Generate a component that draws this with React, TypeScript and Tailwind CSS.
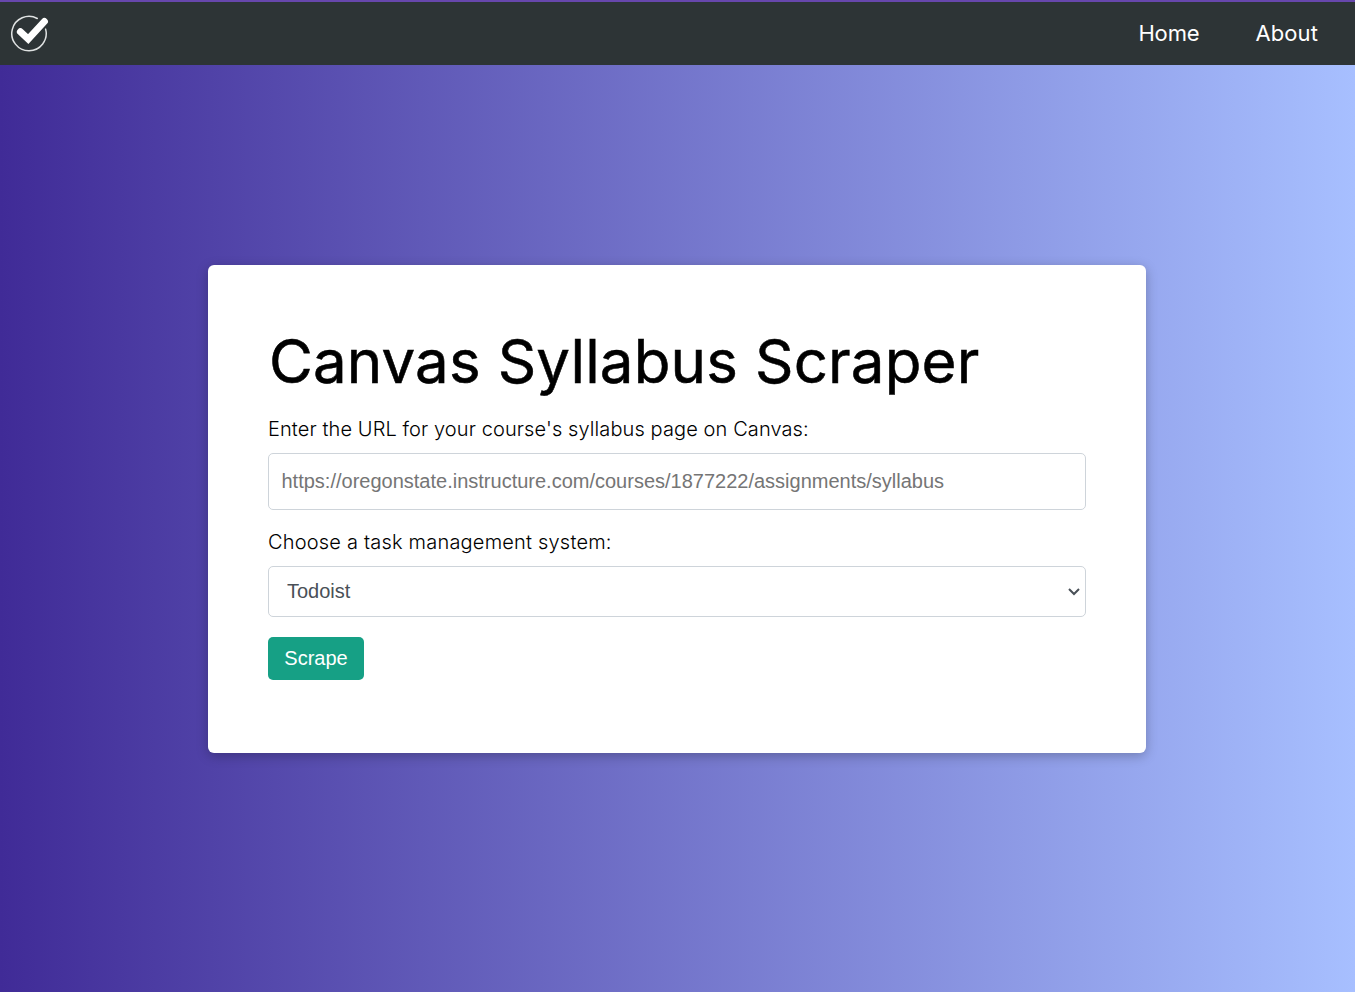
import React from "react";

function CheckLogo() {
  return (
    <svg className="mb-px block" width="40" height="40" viewBox="0 0 40 40" fill="none" aria-hidden="true">
      <path d="M27.3 5.5A17.2 17.2 0 1 0 35.6 16.1" stroke="#dfe2e2" strokeWidth="1.5" strokeLinecap="round" />
      <path d="M10.4 18.8L18.2 26.1L34.4 8.5" stroke="#fff" strokeWidth="7" strokeLinecap="round" strokeLinejoin="miter" />
    </svg>
  );
}

function Chevron() {
  return (
    <svg
      className="pointer-events-none absolute top-[21px] right-[5px]"
      width="14"
      height="10"
      viewBox="0 0 14 10"
      fill="none"
      aria-hidden="true"
    >
      <path d="M2 2L7 7L12 2" stroke="#495057" strokeWidth="2" />
    </svg>
  );
}

export default function App() {
  return (
    <div className="flex h-[992px] flex-col bg-linear-to-r/srgb from-[#402b97] to-[#a7bfff] font-['Inter',sans-serif] text-black">
      <nav className="flex h-[65px] shrink-0 items-center justify-between border-t-2 border-[#6747ad] bg-[#2d3436] pr-[37px] pl-[10px]">
        <a href="#home" aria-label="Logo">
          <CheckLogo />
        </a>
        <div className="mb-0.5 flex gap-14 text-[22px] leading-7 text-white">
          <a href="#home" className="tracking-[-0.15px]">Home</a>
          <a href="#about" className="tracking-[0.1px]">About</a>
        </div>
      </nav>
      <main className="mt-[200px] ml-[208px] h-[488px] w-[938px] rounded-md bg-white px-[60px] pt-[60px] shadow-[0_3px_12px_rgba(0,0,0,0.25)]">
        <h1 className="h-[88px] pl-px text-[60px] leading-[72px] font-normal tracking-[0.14px] whitespace-nowrap [-webkit-text-stroke:0.55px_black]">Canvas Syllabus Scraper</h1>
        <form>
          <label htmlFor="url" className="block h-10 text-[20px] leading-8 font-light tracking-[0.1px]">
            Enter the URL for your course's syllabus page on Canvas:
          </label>
          <input
            id="url"
            placeholder="https://oregonstate.instructure.com/courses/1877222/assignments/syllabus"
            className="block h-[57px] w-full rounded-[5px] border border-[#ced4da] bg-white px-[12.5px] font-['Liberation_Sans',sans-serif] text-[20px] outline-none placeholder:text-[#757575]"
          />
          <label htmlFor="system" className="mt-4 block h-10 text-[20px] leading-8 font-light tracking-[0.2px]">
            Choose a task management system:
          </label>
          <div className="relative">
            <select
              id="system"
              className="block h-[51px] w-full appearance-none rounded-[5px] border border-[#ced4da] bg-white pb-0.5 pl-[18px] font-['Liberation_Sans',sans-serif] text-[20px] text-[#495057]"
            >
              <option>Todoist</option>
            </select>
            <Chevron />
          </div>
          <button
            type="button"
            className="mt-5 h-[43px] w-24 rounded-[5px] bg-[#16a085] pb-0.5 font-['Liberation_Sans',sans-serif] text-[20px] text-white"
          >
            Scrape
          </button>
        </form>
      </main>
    </div>
  );
}
